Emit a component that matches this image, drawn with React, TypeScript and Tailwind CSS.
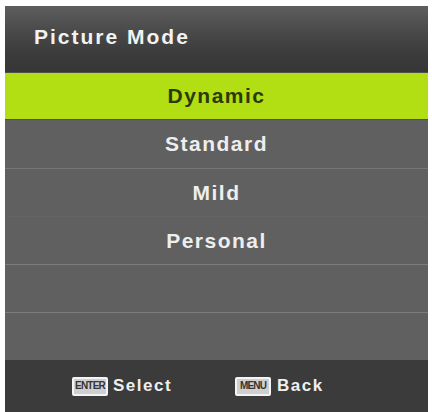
import React from "react";

const font = { fontFamily: '"Liberation Sans", Arial, sans-serif' };

function Row({ label, selected, line }: { label?: string; selected?: boolean; line?: string }) {
  return (
    <div
      className={
        "h-[48px] flex items-center justify-center " +
        (selected ? "bg-[#4e504c] py-px" : "bg-[#606060]") +
        (line ? " border-t " + line : "")
      }
    >
      {selected ? (
        <div className="w-full h-full bg-[#b2de14] flex items-center justify-center">
          <span className="text-[21px] font-bold tracking-[1.5px] text-[#2b3a06]">{label}</span>
        </div>
      ) : (
        <span className="text-[21px] font-bold tracking-[1.5px] text-[#eeeeee]">{label}</span>
      )}
    </div>
  );
}

function Key({ text }: { text: string }) {
  return (
    <div className="w-[36px] h-[19px] rounded-[2px] bg-[#cfcfcf] border-2 border-[#f4f4f4] flex items-center justify-center overflow-hidden">
      <span className="text-[10px] font-bold leading-none tracking-[-0.8px] text-[#333333]">{text}</span>
    </div>
  );
}

export default function App() {
  return (
    <div className="w-[432px] h-[412px] bg-white overflow-hidden" style={font}>
      <div className="ml-[5px] mr-[4px] mt-[6px] h-[406px] flex flex-col bg-[#606060]">
        <div className="h-[66px] flex items-center pl-[29px] pb-[4px] bg-[linear-gradient(180deg,#5e5e5e_0%,#4a4b4a_35%,#3b3c3b_70%,#353635_100%)]">
          <span className="text-[21px] font-bold tracking-[2px] text-[#f2f2f2]">Picture Mode</span>
        </div>
        <Row label="Dynamic" selected />
        <Row label="Standard" />
        <Row label="Mild" line="border-[#767676]" />
        <Row label="Personal" line="border-[#646464]" />
        <Row line="border-[#7c7c7c]" />
        <Row line="border-[#7c7c7c]" />
        <div className="flex-1 bg-[#3b3b3b] flex items-center pl-[67px]">
          <Key text="ENTER" />
          <span className="ml-[5px] text-[17px] font-bold tracking-[1.5px] text-[#efefef]">Select</span>
          <div className="ml-[63px]">
            <Key text="MENU" />
          </div>
          <span className="ml-[6px] text-[17px] font-bold tracking-[1.5px] text-[#efefef]">Back</span>
        </div>
      </div>
    </div>
  );
}
